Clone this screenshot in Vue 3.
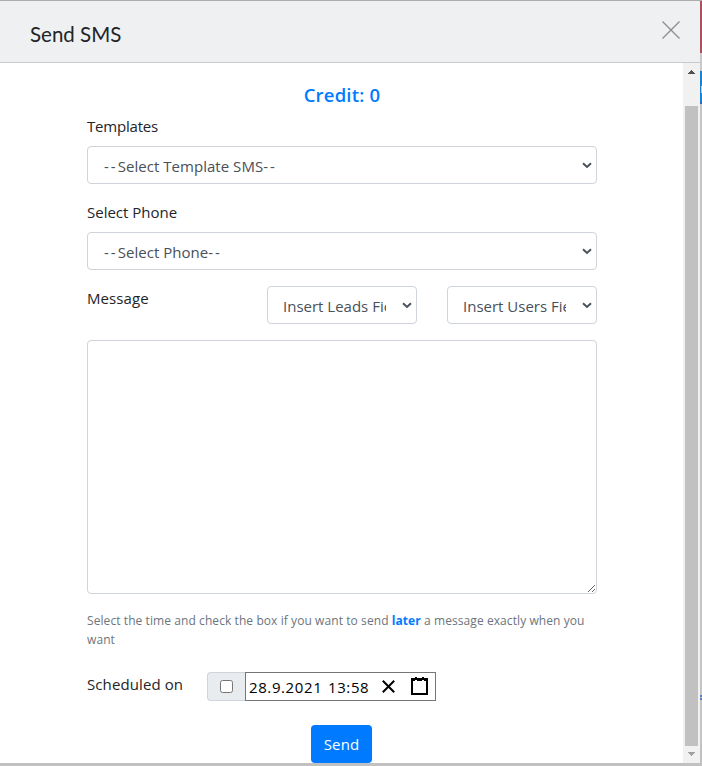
<script setup>
import { ref } from 'vue'

const scheduled = ref(false)
const message = ref('')
</script>

<template>
  <div class="page">
    <section class="modal">
      <header class="modal-header">
        <h1>Send SMS</h1>
        <svg class="close" width="20" height="20" viewBox="0 0 20 20">
          <path d="M1.5 1.5L18.5 18.5M18.5 1.5L1.5 18.5" />
        </svg>
      </header>
      <div class="modal-body">
        <form class="form" @submit.prevent>
          <h2 class="credit">Credit: 0</h2>
          <label class="label tight">Templates</label>
          <div class="select wide">
            <span class="value"><span class="dash">--</span>Select Template SMS<span class="dash">--</span></span>
            <svg class="chevron" width="10" height="7" viewBox="0 0 10 7"><path d="M1 1.2L5 4.9L9 1.2" /></svg>
          </div>
          <label class="label spaced">Select Phone</label>
          <div class="select wide">
            <span class="value"><span class="dash">--</span>Select Phone<span class="dash">--</span></span>
            <svg class="chevron" width="10" height="7" viewBox="0 0 10 7"><path d="M1 1.2L5 4.9L9 1.2" /></svg>
          </div>
          <div class="message-row">
            <label class="label loose">Message</label>
            <div class="select">
              <span class="value">Insert Leads Field</span>
              <svg class="chevron" width="10" height="7" viewBox="0 0 10 7"><path d="M1 1.2L5 4.9L9 1.2" /></svg>
            </div>
            <div class="select">
              <span class="value">Insert Users Field</span>
              <svg class="chevron" width="10" height="7" viewBox="0 0 10 7"><path d="M1 1.2L5 4.9L9 1.2" /></svg>
            </div>
          </div>
          <textarea v-model="message" class="message"></textarea>
          <p class="help">
            Select the time and check the box if you want to send <b>later</b> a message exactly when you<br>want
          </p>
          <div class="schedule">
            <label class="label loose">Scheduled on</label>
            <div class="check-cell" @click="scheduled = !scheduled">
              <span class="checkbox" :class="{ checked: scheduled }"></span>
            </div>
            <div class="datetime">
              <span class="date">28.9.2021</span>
              <span class="time">13:58</span>
              <svg class="clear" width="13" height="13" viewBox="0 0 13 13"><path d="M.8 .8L12.2 12.2M12.2 .8L.8 12.2" /></svg>
              <svg class="calendar" width="17" height="18" viewBox="0 0 17 18">
                <path d="M0 1H4V0H6V1H11V0H13V1H17V18H0ZM2 4V16H15V4H13V3H11V4H6V3H4V4Z" fill-rule="evenodd" />
              </svg>
            </div>
          </div>
          <button class="send">Send</button>
        </form>
        <div class="scrollbar">
          <svg width="7" height="4" viewBox="0 0 7 4"><path d="M0 4V3H1V2H2V1H3V0H4V1H5V2H6V3H7V4Z" fill="#505050" /></svg>
          <div class="thumb"></div>
          <svg width="7" height="4" viewBox="0 0 7 4"><path d="M0 0H7V1H6V2H5V3H4V4H3V3H2V2H1V1H0Z" fill="#a0a0a0" /></svg>
        </div>
      </div>
    </section>
    <aside class="backdrop">
      <div class="red"></div>
      <div class="gap"></div>
      <div class="blue"><i></i></div>
      <div class="rest"><i></i><i></i></div>
    </aside>
  </div>
</template>

<style>
body { margin: 0; overflow: hidden; }
</style>

<style scoped>
* { box-sizing: border-box; }
.page {
  display: flex;
  width: 702px;
  height: 766px;
  background: #c1c1c1;
  border-top: 1px solid #acacae;
  font-family: "Open Sans", "Noto Sans", sans-serif;
  font-size: 15px;
  color: #212529;
  white-space: nowrap;
}
.modal { width: 700px; height: 762px; background: #fff; }
.modal-header {
  display: flex;
  justify-content: space-between;
  height: 62px;
  padding: 19px 19px 0 30px;
  background: #eff0f2;
  border-bottom: 1px solid #c8cacd;
}
h1 { margin: 0; font: 400 20.5px/28px Lato, sans-serif; color: #212529; }
.close { fill: none; stroke: #8b8c8d; stroke-width: 1.3; }
.modal-body { display: flex; height: 700px; }
.form { display: flex; flex-direction: column; width: 683px; padding: 20px 86px 0 87px; }
.credit {
  margin: 0 0 7px;
  text-align: center;
  color: #007bff;
  font-size: 18.5px;
  line-height: 24px;
  font-weight: 600;
  letter-spacing: .2px;
}
.label { display: block; height: 24px; line-height: 24px; margin-bottom: 8px; }
.tight { letter-spacing: -.2px; }
.loose { letter-spacing: .1px; }
.spaced { margin-top: 16px; }
.select {
  display: flex;
  align-items: center;
  justify-content: space-between;
  height: 38px;
  padding: 0 4px 0 15px;
  border: 1px solid #ced4da;
  border-radius: 4px;
  color: #495057;
}
.wide { padding-left: 16px; letter-spacing: .04px; }
.value { overflow: hidden; line-height: 24px; padding-top: 2px; }
.dash { letter-spacing: 2px; }
.chevron { flex: none; fill: none; stroke: #495057; stroke-width: 2; }
.message-row { display: grid; grid-template-columns: 150px 150px 150px; gap: 30px; margin-top: 16px; }
.message-row .value { width: 103px; }
.message {
  height: 254px;
  flex: none;
  margin: 16px 0 0;
  border: 1px solid #ced4da;
  border-radius: 4px;
  outline: none;
  resize: both;
}
.help { margin: 17px 0 0; font-size: 12px; line-height: 19px; letter-spacing: .08px; color: #6c757d; }
.help b { color: #007bff; }
.schedule { display: flex; margin-top: 23px; height: 29px; }
.schedule .label { width: 120px; }
.check-cell {
  display: flex;
  align-items: center;
  justify-content: center;
  width: 38px;
  border: 1px solid #ced4da;
  border-right: 0;
  border-radius: 4px 0 0 4px;
  background: #e9ecef;
}
.checkbox { width: 13px; height: 13px; background: #fff; border: 1px solid #767676; border-radius: 2.5px; }
.checkbox.checked { background: #0075ff; }
.datetime { display: flex; align-items: center; width: 191px; padding-left: 3px; border: 1px solid #767676; color: #000; }
.date { width: 79px; padding-top: 1px; letter-spacing: .6px; }
.time { width: 54px; padding-top: 1px; letter-spacing: .6px; }
.clear { fill: none; stroke: #000; stroke-width: 2; }
.calendar { margin-left: 16px; margin-top: -2px; }
.send {
  margin: 24px 0 0 224px;
  width: 61px;
  height: 38px;
  flex: none;
  padding: 0;
  border: 0;
  border-radius: 4px;
  background: #007bff;
  color: #fff;
  font: inherit;
  letter-spacing: .1px;
}
.scrollbar { display: flex; flex-direction: column; align-items: center; width: 17px; padding: 7px 0; background: #f1f1f1; }
.thumb { flex: none; width: 13px; height: 640px; margin: 32px 0 6px; background: #c1c1c1; }
.backdrop { width: 2px; }
.red { height: 52px; background: #a9515e; }
.gap { height: 18px; background: #c9c9c9; }
.blue { height: 33px; padding: 15px 0 0 1px; background: #1a83cf; border-bottom: 2px solid #3465a8; }
.blue i { display: block; width: 1px; height: 7px; background: #c9c9c9; }
.rest { height: 640px; padding-top: 591px; background: #c5c5c5; }
.rest i { display: block; width: 2px; height: 2px; margin-bottom: 1px; background: #5a7ebd; }
</style>
